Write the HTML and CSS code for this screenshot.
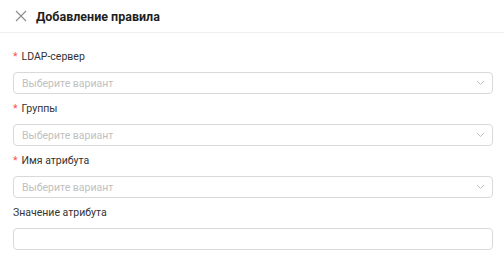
FILE: index.html
```html
<!DOCTYPE html>
<html lang="ru">
<head>
<meta charset="utf-8">
<link rel="stylesheet" href="styles.css">
</head>
<body>
<div class="header">
  <svg class="close" width="12" height="12" viewBox="0 0 12 12"><path d="M1 1L11 11M11 1L1 11" stroke="#8c8c8c" stroke-width="1.1" fill="none"/></svg>
  <span class="title">Добавление правила</span>
</div>
<div class="form">
  <div class="field">
    <div class="label"><span class="req">*</span>LDAP-сервер</div>
    <div class="select"><span class="ph">Выберите вариант</span><svg class="chev" width="9" height="6" viewBox="0 0 9 6"><path d="M1 1L4.5 4.5L8 1" stroke="#bfbfbf" stroke-width="1" fill="none"/></svg></div>
  </div>
  <div class="field">
    <div class="label"><span class="req">*</span>Группы</div>
    <div class="select"><span class="ph">Выберите вариант</span><svg class="chev" width="9" height="6" viewBox="0 0 9 6"><path d="M1 1L4.5 4.5L8 1" stroke="#bfbfbf" stroke-width="1" fill="none"/></svg></div>
  </div>
  <div class="field">
    <div class="label"><span class="req">*</span>Имя атрибута</div>
    <div class="select"><span class="ph">Выберите вариант</span><svg class="chev" width="9" height="6" viewBox="0 0 9 6"><path d="M1 1L4.5 4.5L8 1" stroke="#bfbfbf" stroke-width="1" fill="none"/></svg></div>
  </div>
  <div class="field">
    <div class="label">Значение атрибута</div>
    <div class="input"></div>
  </div>
</div>
</body>
</html>
```
FILE: styles.css
```css
body {
  margin: 0;
  background: #fff;
  font-family: "Roboto", "Noto Sans", sans-serif;
  color: #262626;
}
.header {
  height: 33px;
  border-bottom: 1px solid #f0f0f0;
  display: flex;
  align-items: center;
  padding-left: 15px;
  box-sizing: border-box;
  gap: 9px;
}
.close { display: block; }
.title {
  font-weight: 700;
  font-size: 12.5px;
  color: #1f1f1f;
}
.form {
  padding: 16px 11px 0 13px;
}
.field {
  margin-bottom: 7px;
}
.label {
  font-size: 10.5px;
  line-height: 16px;
  padding: 0 0 7px 0;
  color: #333;
}
.req {
  color: #ff4d4f;
  margin-right: 4px;
}
.select, .input {
  height: 22px;
  border: 1px solid #d9d9d9;
  border-radius: 4px;
  box-sizing: border-box;
  display: flex;
  align-items: center;
  padding: 0 7px 0 8px;
}
.ph {
  flex: 1;
  font-size: 10.5px;
  color: #bfbfbf;
}
.chev { display: block; }
```
